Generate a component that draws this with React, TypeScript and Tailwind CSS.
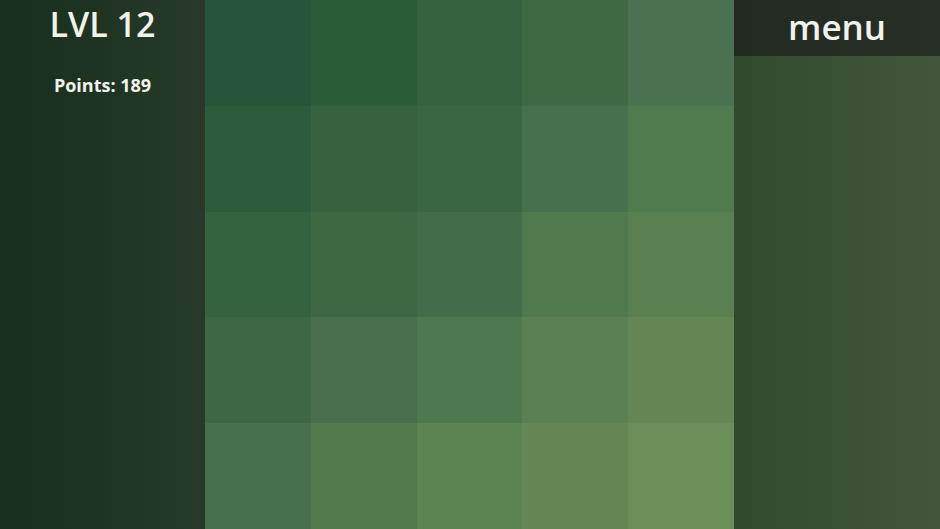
const tiles = [
  ["#27553a", "#2b5c3a", "#36613f", "#3e6942", "#4a7150"],
  ["#2c5c3c", "#38613f", "#3a6641", "#47704d", "#4f7b4e"],
  ["#36633f", "#3d6842", "#436c4a", "#507a4d", "#5a8051"],
  ["#3d6843", "#496f4c", "#4e784d", "#5b8052", "#658756"],
  ["#47714c", "#517a4c", "#5c8352", "#638755", "#6b8f5a"],
];

export default function App() {
  return (
    <div className="flex h-[529px] w-[940px] overflow-hidden font-['Open_Sans',sans-serif] text-[#f2f2ec]">
      <div className="flex w-[205px] flex-col items-center bg-gradient-to-r from-[#162f1e] to-[#273a29]">
        <div className="mt-[3px] text-[34px] font-semibold leading-[42px]">LVL 12</div>
        <div className="mt-[28px] text-[18px] font-bold leading-[24px]">Points: 189</div>
      </div>
      <div className="grid h-[529px] w-[529px] grid-cols-5 grid-rows-5">
        {tiles.flat().map((c, i) => (
          <div key={i} style={{ backgroundColor: c }} />
        ))}
      </div>
      <div className="flex flex-1 flex-col bg-gradient-to-r from-[#314a2e] to-[#43563a]">
        <div className="flex h-[56px] items-center justify-center bg-gradient-to-r from-[#222a21] to-[#272f26] text-[35px] font-semibold leading-none">
          <span className="-mt-[4px]">menu</span>
        </div>
      </div>
    </div>
  );
}
